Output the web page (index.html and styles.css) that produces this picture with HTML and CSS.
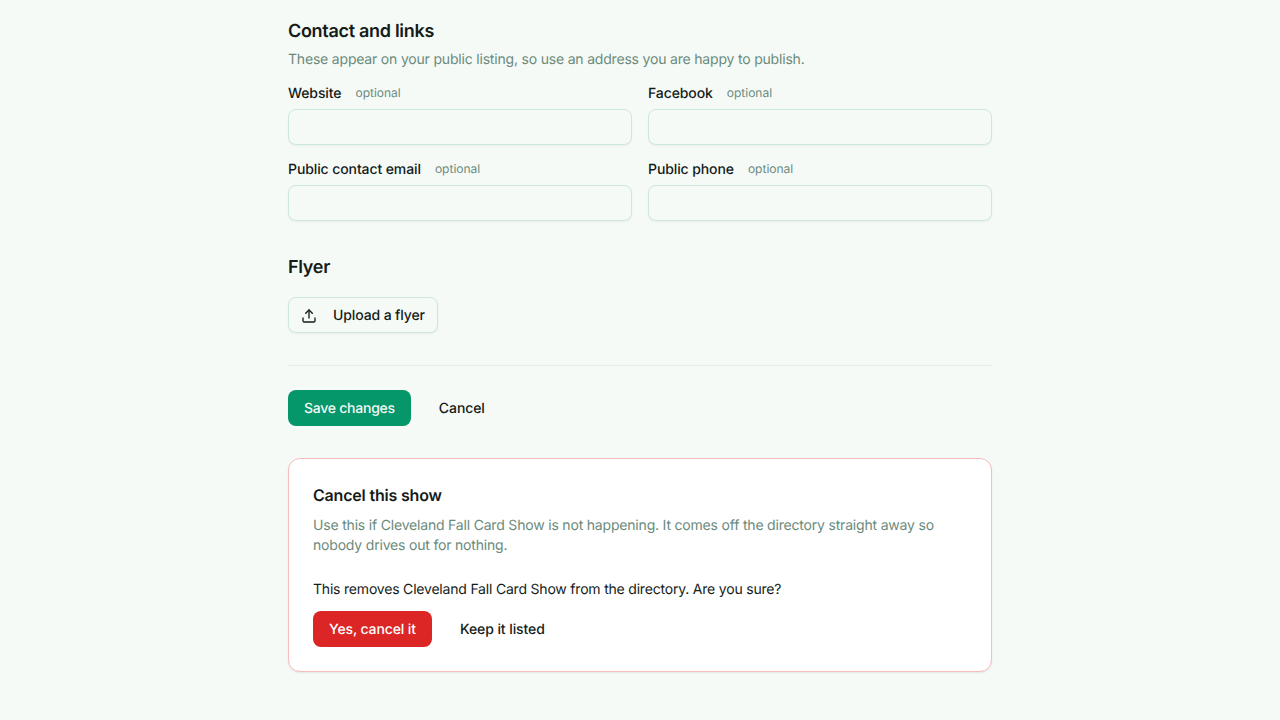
FILE: index.html
```html
<!DOCTYPE html>
<html lang="en">

<head>
    <meta charset="UTF-8">
    <meta name="viewport" content="width=device-width, initial-scale=1.0">
    <title>Edit show</title>
    <link rel="stylesheet" href="styles.css">
</head>

<body>
    <main class="page">
        <section class="section">
            <h2>Contact and links</h2>
            <p class="hint">These appear on your public listing, so use an address you are happy to publish.</p>
            <div class="field-grid">
                <div class="field">
                    <label for="website">Website <span class="optional">optional</span></label>
                    <input id="website" type="text">
                </div>
                <div class="field">
                    <label for="facebook">Facebook <span class="optional">optional</span></label>
                    <input id="facebook" type="text">
                </div>
                <div class="field">
                    <label for="email">Public contact email <span class="optional">optional</span></label>
                    <input id="email" type="email">
                </div>
                <div class="field">
                    <label for="phone">Public phone <span class="optional">optional</span></label>
                    <input id="phone" type="text">
                </div>
            </div>
        </section>

        <section class="section flyer">
            <h2>Flyer</h2>
            <button class="btn btn-outline" type="button">
                <svg xmlns="http://www.w3.org/2000/svg" width="16" height="16" viewBox="0 0 24 24" fill="none" stroke="currentColor" stroke-width="2" stroke-linecap="round" stroke-linejoin="round">
                    <path d="M12 3v12" />
                    <path d="m17 8-5-5-5 5" />
                    <path d="M21 15v4a2 2 0 0 1-2 2H5a2 2 0 0 1-2-2v-4" />
                </svg>
                Upload a flyer
            </button>
        </section>

        <div class="actions">
            <button class="btn btn-primary" type="button">Save changes</button>
            <button class="btn btn-ghost" type="button">Cancel</button>
        </div>

        <section class="danger-card">
            <h3>Cancel this show</h3>
            <p class="hint">Use this if Cleveland Fall Card Show is not happening. It comes off the directory straight away so nobody drives out for nothing.</p>
            <p class="confirm">This removes Cleveland Fall Card Show from the directory. Are you sure?</p>
            <div class="danger-actions">
                <button class="btn btn-danger" type="button">Yes, cancel it</button>
                <button class="btn btn-ghost" type="button">Keep it listed</button>
            </div>
        </section>
    </main>
</body>

</html>
```

FILE: styles.css
```css
* {
    margin: 0;
    padding: 0;
    box-sizing: border-box;
    font-family: Inter, 'Noto Sans', sans-serif;
    text-rendering: geometricPrecision;
}

body {
    background-color: #f5faf7;
    color: #141b18;
    font-size: 14px;
    line-height: 20px;
}

.page {
    width: 704px;
    margin: 0 auto;
    padding: 19px 0 48px;
}

h2 {
    font-size: 18px;
    line-height: 26px;
    font-weight: 600;
    letter-spacing: -0.3px;
}

h3 {
    font-size: 16px;
    line-height: 24px;
    font-weight: 600;
    letter-spacing: -0.19px;
}

.hint {
    color: #6b8a7c;
    font-size: 14px;
    line-height: 20px;
    letter-spacing: -0.19px;
}

.section .hint {
    margin-top: 5px;
}

.field-grid {
    display: grid;
    grid-template-columns: 1fr 1fr;
    column-gap: 16px;
    row-gap: 15px;
    margin-top: 14px;
}

.field label {
    display: flex;
    align-items: center;
    gap: 14px;
    font-size: 14px;
    line-height: 20px;
    font-weight: 500;
    letter-spacing: -0.1px;
    margin-bottom: 5px;
}

.optional {
    color: #6b8a7c;
    font-size: 12px;
    line-height: 16px;
    font-weight: 400;
    letter-spacing: 0;
    margin-bottom: 2px;
}

input {
    display: block;
    width: 100%;
    height: 36px;
    background-color: #f5faf7;
    border: 1px solid #cce8dc;
    border-radius: 8px;
    box-shadow: 0 1px 2px rgba(0, 0, 0, 0.05);
}

input:focus {
    outline: none;
    border-color: #059669;
}

.flyer {
    margin-top: 34px;
}

.flyer .btn {
    margin-top: 16px;
}

.btn {
    display: inline-flex;
    align-items: center;
    height: 36px;
    padding: 2px 16px 0;
    border: none;
    border-radius: 8px;
    background: transparent;
    color: #141b18;
    font-size: 14px;
    line-height: 20px;
    font-weight: 500;
    letter-spacing: -0.12px;
    cursor: pointer;
}

.btn-ghost {
    letter-spacing: -0.08px;
}

.btn-outline {
    gap: 16px;
    padding: 2px 12px 0;
    background-color: #f5faf7;
    border: 1px solid #cce8dc;
    box-shadow: 0 1px 2px rgba(0, 0, 0, 0.05);
}

.btn-primary {
    background-color: #059669;
    color: #f5faf7;
    letter-spacing: -0.25px;
}

.btn-danger {
    background-color: #dc2626;
    color: #fff;
}

.actions {
    display: flex;
    gap: 12px;
    margin-top: 32px;
    padding-top: 24px;
    border-top: 1px solid #e3efe9;
}

.danger-card {
    margin-top: 32px;
    padding: 24px;
    background-color: #fff;
    border: 1px solid #f9bcbc;
    border-radius: 12px;
    box-shadow: 0 1px 2px rgba(0, 0, 0, 0.08);
}

.danger-card .hint {
    margin-top: 9px;
}

.confirm {
    margin-top: 24px;
    letter-spacing: -0.2px;
}

.danger-actions {
    display: flex;
    gap: 12px;
    margin-top: 11px;
}
```
